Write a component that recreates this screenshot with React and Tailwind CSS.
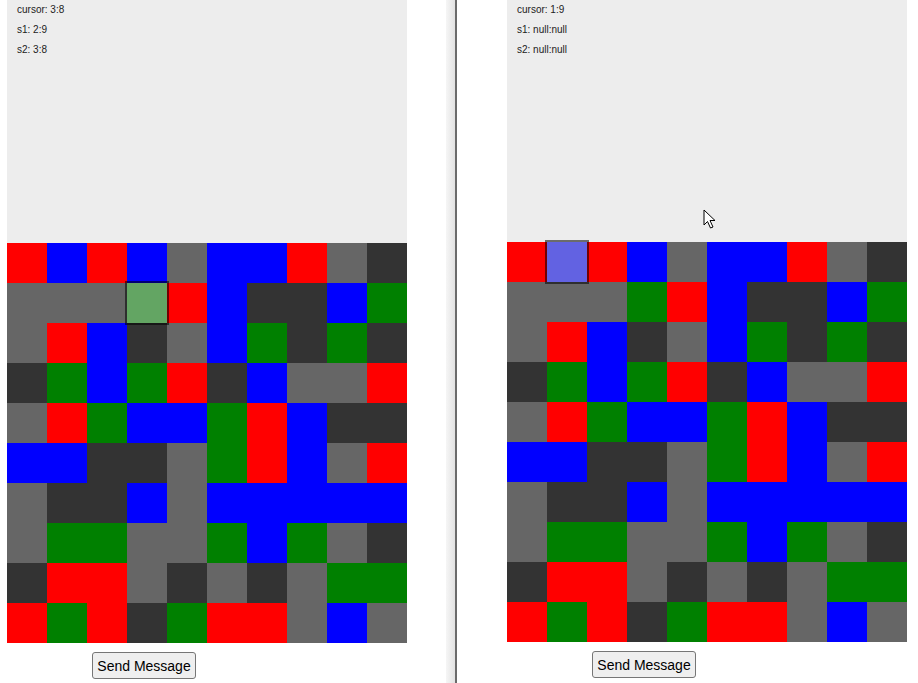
import React from 'react';

const COLORS = {
  R: 'bg-[#ff0000]',
  B: 'bg-[#0000ff]',
  G: 'bg-[#008000]',
  g: 'bg-[#666666]',
  D: 'bg-[#333333]',
};

const BOARD = [
  'RBRBgBBRgD',
  'gggGRBDDBG',
  'gRBDgBGDGD',
  'DGBGRDBggR',
  'gRGBBGRBDD',
  'BBDDgGRBgR',
  'gDDBgBBBBB',
  'gGGggGBGgD',
  'DRRgDgDgGG',
  'RGRDGRRgBg',
];

const Board = ({ cursor, highlight }) => (
  <div className="grid grid-cols-10 w-[400px]">
    {BOARD.map((row, r) =>
      row.split('').map((c, col) => {
        const active = cursor[0] === r && cursor[1] === col;
        return (
          <div
            key={`${r}-${col}`}
            className={
              active
                ? `h-[40px] relative z-10 outline-2 outline-solid outline-[rgba(0,0,0,0.55)] ${highlight}`
                : `h-[40px] ${COLORS[c]}`
            }
          />
        );
      })
    )}
  </div>
);

const Panel = ({ lines, cursor, highlight, topHeight, showPointer }) => (
  <div className="flex flex-col w-[400px]">
    <div
      className={`relative bg-[#ededed] pl-[10px] text-[10px] text-[#222] ${topHeight}`}
      style={{ fontFamily: '"Liberation Sans", Arial, sans-serif' }}
    >
      {lines.map((l) => (
        <div key={l} className="leading-[20px]">{l}</div>
      ))}
      {showPointer && (
        <svg
          className="absolute left-[196px] top-[209px]"
          width="14"
          height="21"
          viewBox="0 0 14 21"
        >
          <path
            d="M1 1 L1 16 L4.5 12.5 L7.5 19 L10 18 L7 11.5 L12 11.5 Z"
            fill="#fff"
            stroke="#000"
            strokeWidth="1"
            strokeLinejoin="round"
          />
        </svg>
      )}
    </div>
    <Board cursor={cursor} highlight={highlight} />
    <div className="pt-[9px] pl-[85px]">
      <button
        className="w-[104px] h-[27px] bg-[#efefef] border border-[#767676] rounded-[3px] text-[14px] text-black leading-none"
        style={{ fontFamily: '"Liberation Sans", Arial, sans-serif' }}
      >
        Send Message
      </button>
    </div>
  </div>
);

export default function App() {
  return (
    <div className="w-[918px] h-[683px] bg-white flex overflow-hidden">
      <div className="w-[446px] pl-[7px]">
        <Panel
          lines={['cursor: 3:8', 's1: 2:9', 's2: 3:8']}
          cursor={[1, 3]}
          highlight="bg-[#63a563]"
          topHeight="h-[243px]"
        />
      </div>
      <div className="w-[11px] h-full bg-gradient-to-r from-[#f6f6f6] to-[#e2e2e2] border-r-2 border-[#6b6b6b]" />
      <div className="flex-1 pl-[50px]">
        <Panel
          lines={['cursor: 1:9', 's1: null:null', 's2: null:null']}
          cursor={[0, 1]}
          highlight="bg-[#6262e2]"
          topHeight="h-[242px]"
          showPointer
        />
      </div>
    </div>
  );
}
